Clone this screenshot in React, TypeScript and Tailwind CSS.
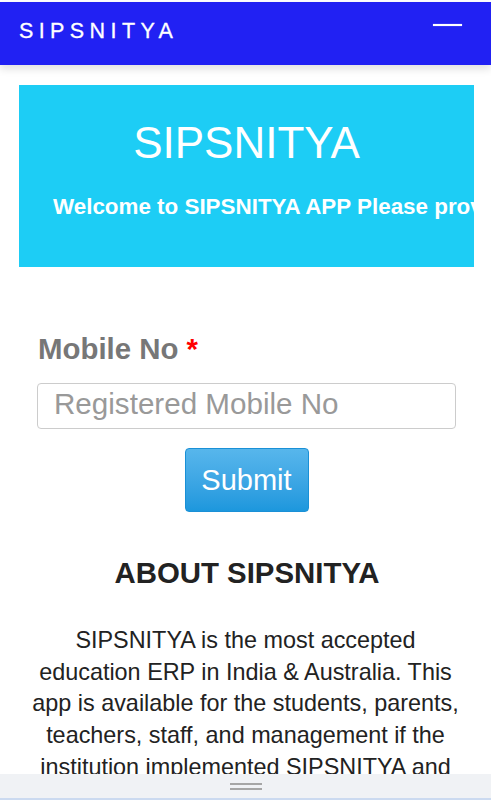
import React from "react";

export default function App() {
  return (
    <div className="min-h-screen bg-white font-['Liberation_Sans',Arial,sans-serif] pb-[60px]">
      {/* Header */}
      <header className="mt-[2px] h-[63px] bg-[#2121f3] flex justify-between items-center pl-[19px] pr-[29px] pb-[4px] shadow-[0_4px_8px_rgba(0,0,0,0.12)]">
        <div className="text-white text-[21.5px] leading-none tracking-[5.4px] [-webkit-text-stroke:0.3px_white]">SIPSNITYA</div>
        <div className="self-start mt-[22px] w-[29px] h-[2px] bg-white shadow-[0_0_1px_rgba(255,255,255,0.8)]" />
      </header>

      {/* Banner */}
      <div className="mt-[20px] ml-[19px] w-[455px] h-[182px] bg-[#1dcdf5] overflow-hidden pt-[36px]">
        <div className="text-white text-[44px] leading-none text-center">SIPSNITYA</div>
        <div className="mt-[31px] pl-[34px] text-white font-bold text-[22.4px] leading-none whitespace-nowrap">
          Welcome to SIPSNITYA APP Please provide your registered mobile number to continue
        </div>
      </div>

      {/* Form */}
      <div className="mt-[67px] ml-[37px] w-[419px] flex flex-col">
        <label className="pl-[1px] text-[29.4px] leading-[29px] font-bold text-[#777]">
          Mobile No <span className="text-[#ff0000]">*</span>
        </label>
        <input
          type="text"
          placeholder="Registered Mobile No"
          className="mt-[20px] h-[46px] w-full border border-[#cccccc] rounded-[4px] pl-[16px] pb-[4px] text-[29.6px] text-[#555] placeholder:text-[#999] outline-none"
        />
        <div className="mt-[19px] flex justify-center">
          <button className="w-[124px] h-[64px] rounded-[4px] border border-[#1a90d6] bg-gradient-to-b from-[#57b6ec] to-[#1c97dd] text-white text-[29px] leading-none">
            Submit
          </button>
        </div>
      </div>

      {/* About */}
      <h2 className="mt-[46px] text-center text-[29.4px] leading-[29px] font-bold text-[#222] pl-[3px]">ABOUT SIPSNITYA</h2>
      <p className="mt-[38px] px-[27px] text-center text-[23.4px] leading-[31.7px] text-[#222]">
        SIPSNITYA is the most accepted education ERP in India &amp; Australia. This app is available for the students, parents, teachers, staff, and management if the institution implemented SIPSNITYA and provided the login credentials to its users.
      </p>

      {/* Bottom handle bar */}
      <div className="fixed bottom-0 left-0 right-0 h-[26px] bg-[#f0f2f5] border-b-[2px] border-[#cbdaf0] flex flex-col items-center pt-[9px] gap-[3px]">
        <div className="w-[32px] h-[2px] bg-[#a6a6a6]" />
        <div className="w-[32px] h-[2px] bg-[#a6a6a6]" />
      </div>
    </div>
  );
}
